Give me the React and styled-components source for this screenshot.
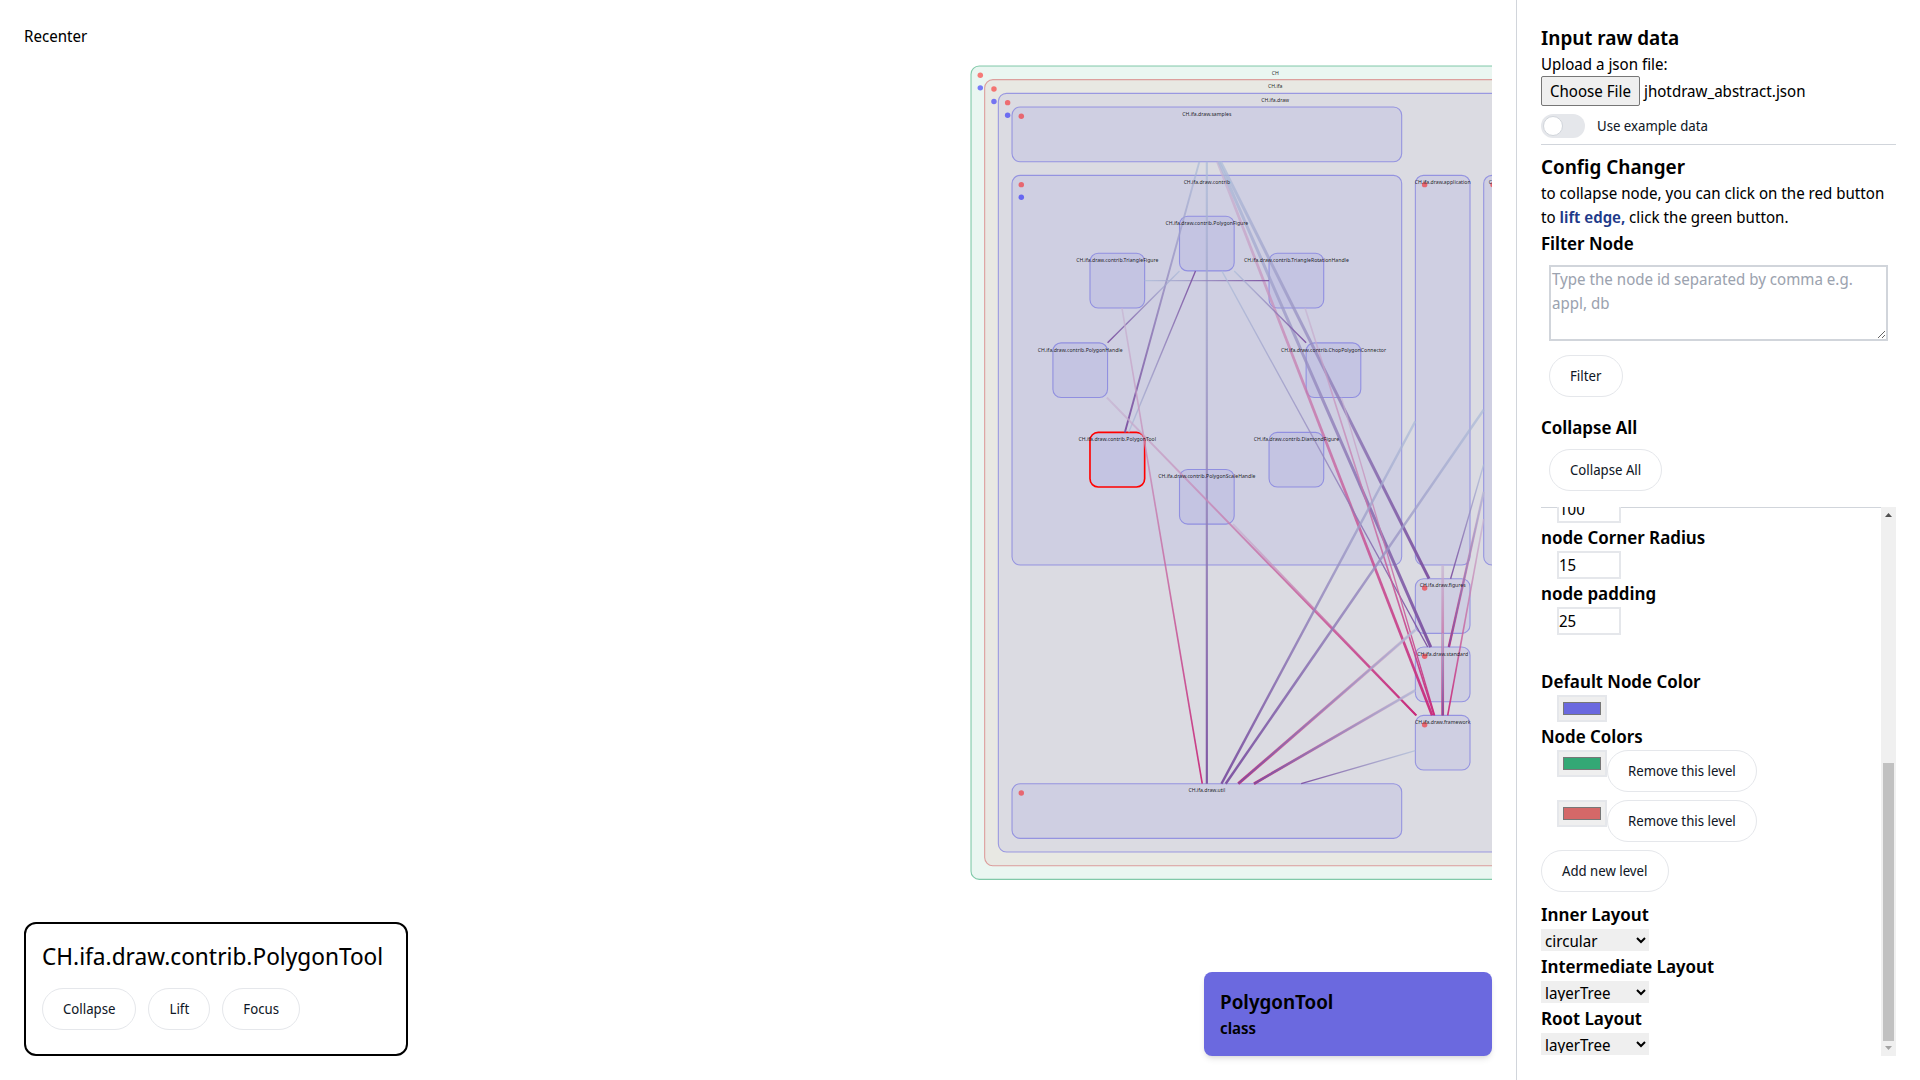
import React, { useEffect, useRef } from "react";
import styled, { createGlobalStyle } from "styled-components";

const Global = createGlobalStyle`
  *, *::before, *::after { box-sizing: border-box; }
  body {
    margin: 0;
    background: #fff;
    color: #000;
    font-family: "Noto Sans Display", "Noto Sans", sans-serif;
    font-size: 16px;
    line-height: 24px;
  }
  h1, h2, h3, p { margin: 0; }
  button, input, select, textarea { font: inherit; color: inherit; margin: 0; }
`;

const Page = styled.div`
  display: flex;
  height: 100vh;
  overflow: hidden;
`;

const Main = styled.main`
  position: relative;
  flex: 1;
  min-width: 0;
  padding: 24px;
`;

const Canvas = styled.svg`
  display: block;
  width: 100%;
  height: 100%;
`;

const Recenter = styled.button`
  position: absolute;
  top: 24px;
  left: 24px;
  padding: 0;
  border: 0;
  background: none;
`;

const Pill = styled.button`
  padding: 10px 20px;
  border: 1px solid #e5e7eb;
  border-radius: 999px;
  background: #fff;
  color: #111827;
  font-size: 14px;
  line-height: 20px;
  white-space: nowrap;
`;

const NodePanel = styled.section`
  position: absolute;
  left: 24px;
  bottom: 24px;
  min-width: 384px;
  padding: 16px 16px 24px;
  border: 2px solid #000;
  border-radius: 12px;
  background: #fff;
`;

const NodeName = styled.h1`
  font-size: 24px;
  font-weight: 400;
  line-height: 32px;
`;

const Actions = styled.div`
  display: flex;
  gap: 12px;
  margin-top: 16px;
`;

const Legend = styled.section`
  position: absolute;
  right: 24px;
  bottom: 24px;
  width: 288px;
  padding: 16px;
  border-radius: 8px;
  background: #6b69df;
  box-shadow: 0 4px 6px -1px rgba(0, 0, 0, 0.1), 0 2px 4px -2px rgba(0, 0, 0, 0.1);
`;

const Title = styled.h2`
  font-size: 20px;
  font-weight: 600;
  line-height: 28px;
`;

const Kind = styled.p`
  font-weight: 600;
`;

const Sidebar = styled.aside`
  display: flex;
  flex-direction: column;
  width: 404px;
  padding: 24px;
  border-left: 1px solid #d1d5db;
`;

const Heading = styled.h3`
  font-size: 18px;
  font-weight: 600;
  line-height: 28px;
`;

const FileRow = styled.div`
  display: flex;
  align-items: center;
  gap: 4px;
`;

const FileLabel = styled.label`
  display: block;
`;

const FileButton = styled.button`
  height: 30px;
  padding: 0 8px;
  border: 1px solid #767676;
  border-radius: 2px;
  background: #efefef;
`;

const Toggle = styled.label`
  display: flex;
  align-items: center;
  gap: 12px;
  height: 24px;
  margin-top: 8px;
  color: #111827;
  font-size: 14px;
  line-height: 20px;
`;

const Switch = styled.input`
  appearance: none;
  display: flex;
  align-items: center;
  width: 44px;
  height: 24px;
  padding: 2px;
  border-radius: 12px;
  background: #e5e7eb;
  &::before {
    content: "";
    width: 20px;
    height: 20px;
    border: 1px solid #d1d5db;
    border-radius: 50%;
    background: #fff;
  }
  &:checked { background: #2563eb; justify-content: flex-end; }
`;

const Rule = styled.hr`
  flex: none;
  width: 100%;
  height: 1px;
  margin: ${(p) => p.$space};
  border: 0;
  background: #d1d5db;
`;

const Lift = styled.strong`
  color: #1e3a8a;
  font-weight: 600;
`;

const FilterBox = styled.textarea`
  display: block;
  width: calc(100% - 16px);
  height: 76px;
  margin: 8px 8px 14px;
  padding: 0 1px;
  border: 2px solid #d1d5db;
  border-radius: 0;
  resize: both;
  outline: none;
  &::placeholder { color: #9ca3af; }
`;

const Indent = styled.div`
  padding: ${(p) => p.$pad};
`;

const ScrollArea = styled.div`
  display: flex;
  flex: 1;
  min-height: 0;
  margin-top: -1px;
`;

const Scroller = styled.div`
  flex: 1;
  min-width: 0;
  overflow-y: scroll;
  scrollbar-width: none;
`;

const ScrollTrack = styled.div`
  display: flex;
  flex-direction: column;
  width: 15px;
  background: #f0f0f0;
`;

const ScrollStep = styled.svg`
  flex: none;
  width: 15px;
  height: 15px;
  fill: ${(p) => (p.$active ? "#505050" : "#a3a3a3")};
`;

const ScrollGap = styled.div`
  flex: 241;
`;

const ScrollThumb = styled.div`
  flex: 278;
  margin: 0 2px;
  background: #c1c1c1;
`;

const Settings = styled.div`
  padding-top: 464px;
`;

const NumberInput = styled.input`
  display: block;
  width: 64px;
  height: 28px;
  margin-left: 16px;
  padding: 0;
  border: 2px solid #e5e7eb;
  background: #fff;
  appearance: textfield;
`;

const ColorInput = styled.input`
  display: block;
  flex: none;
  width: 50px;
  height: 27px;
  margin-left: 16px;
  padding: 1px 2px;
  border: 2px solid #e5e7eb;
  background: #efefef;
`;

const ColorGroup = styled.div`
  margin-top: 32px;
`;

const LevelRow = styled.div`
  display: flex;
  align-items: flex-start;
  margin-bottom: 8px;
`;

const LayoutGroup = styled.div`
  margin-top: 8px;
`;

const SelectRow = styled.div`
  display: flex;
  align-items: center;
  height: 24px;
`;

const Select = styled.select`
  width: 108px;
  height: 22px;
  padding: 0 0 2px;
  border: 0;
  border-radius: 0;
  background: #efefef;
  line-height: 20px;
`;

const Label = styled.text`
  font-size: 10px;
  text-anchor: middle;
  fill: #000;
  fill-opacity: 0.85;
`;

/* Level colours: root, second level, and the default for everything deeper. */
const GREEN = "#33a875";
const RED = "#d46868";
const VIOLET = "#6b69df";

const LEAF = 100;
const INNER = 712.8;
const CX = 431.4;
const CY = 556.4;
const R = 231.6;
const ring = (step) => {
  const a = (step * Math.PI) / 4;
  return { x: CX + R * Math.sin(a) - 50, y: CY - R * Math.cos(a) - 50, w: LEAF, h: LEAF };
};

const nodes = {
  CH: { x: 0, y: 0, w: 1112.8, h: 1487.8, color: GREEN, dots: 2 },
  "CH.ifa": { x: 25, y: 25, w: 1062.8, h: 1437.8, color: RED, dots: 2 },
  "CH.ifa.draw": { x: 50, y: 50, w: 1012.8, h: 1387.8, dots: 2 },
  "CH.ifa.draw.samples": { x: 75, y: 75, w: INNER, h: LEAF, dots: 1 },
  "CH.ifa.draw.contrib": { x: 75, y: 200, w: INNER, h: INNER, dots: 2 },
  "CH.ifa.draw.application": { x: 812.8, y: 200, w: LEAF, h: INNER, dots: 1 },
  "CH.ifa.draw.applet": { x: 937.8, y: 200, w: LEAF, h: INNER, dots: 1 },
  "CH.ifa.draw.figures": { x: 812.8, y: 937.8, w: LEAF, h: LEAF, dots: 1 },
  "CH.ifa.draw.standard": { x: 812.8, y: 1062.8, w: LEAF, h: LEAF, dots: 1 },
  "CH.ifa.draw.framework": { x: 812.8, y: 1187.8, w: LEAF, h: LEAF, dots: 1 },
  "CH.ifa.draw.util": { x: 75, y: 1312.8, w: INNER, h: LEAF, dots: 1 },
  "CH.ifa.draw.contrib.PolygonFigure": ring(0),
  "CH.ifa.draw.contrib.TriangleRotationHandle": ring(1),
  "CH.ifa.draw.contrib.ChopPolygonConnector": ring(2),
  "CH.ifa.draw.contrib.DiamondFigure": ring(3),
  "CH.ifa.draw.contrib.PolygonScaleHandle": ring(4),
  "CH.ifa.draw.contrib.PolygonTool": { ...ring(5), selected: true },
  "CH.ifa.draw.contrib.PolygonHandle": ring(6),
  "CH.ifa.draw.contrib.TriangleFigure": ring(7),
};

/* source, target, kind, width */
const edges = [
  ["samples", "framework", "pink", 5],
  ["samples", "standard", "purple", 5.5],
  ["samples", "figures", "purple", 5.5],
  ["samples", "util", "purple", 4],
  ["samples", "contrib.PolygonTool", "purple", 3.5],
  ["contrib.TriangleFigure", "contrib.TriangleRotationHandle", "purple", 2.5],
  ["contrib.PolygonFigure", "contrib.PolygonHandle", "purple", 2.5],
  ["contrib.PolygonTool", "contrib.PolygonFigure", "purple", 2.5],
  ["contrib.PolygonFigure", "contrib.ChopPolygonConnector", "purple", 2.5],
  ["contrib.PolygonFigure", "standard", "purple", 2.5],
  ["contrib.TriangleFigure", "util", "pink", 3],
  ["contrib.TriangleRotationHandle", "framework", "pink", 3],
  ["contrib.PolygonHandle", "framework", "pink", 3.5],
  ["contrib.PolygonScaleHandle", "framework", "pink", 3],
  ["contrib.ChopPolygonConnector", "framework", "pink", 2.5],
  ["application", "util", "purple", 4.5],
  ["applet", "util", "purple", 4.5],
  ["figures", "util", "pink", 5.5],
  ["figures", "util", "purple", 3],
  ["standard", "util", "pink", 5],
  ["standard", "util", "purple", 3.5],
  ["framework", "util", "purple", 2.5],
  ["application", "framework", "pink", 5],
  ["figures", "framework", "purple", 3],
  ["applet", "figures", "purple", 2.5],
  ["applet", "standard", "pink", 4.5],
  ["applet", "standard", "purple", 2.5],
  ["applet", "framework", "pink", 3],
];

const edgeColors = {
  purple: ["#abbbd8", "#7b4fa0"],
  pink: ["#c6b4d2", "#c8287a"],
};

/* Point where the ray from the centre of a towards the centre of b leaves a. */
function border(a, b) {
  const ax = a.x + a.w / 2;
  const ay = a.y + a.h / 2;
  const dx = b.x + b.w / 2 - ax;
  const dy = b.y + b.h / 2 - ay;
  const t = Math.min(
    dx ? a.w / 2 / Math.abs(dx) : Infinity,
    dy ? a.h / 2 / Math.abs(dy) : Infinity
  );
  return [ax + dx * t, ay + dy * t];
}

function GraphEdge({ id, edge }) {
  const [from, to, kind, width] = edge;
  const a = nodes["CH.ifa.draw." + from];
  const b = nodes["CH.ifa.draw." + to];
  const [x1, y1] = border(a, b);
  const [x2, y2] = border(b, a);
  const [start, end] = edgeColors[kind];
  return (
    <g>
      <linearGradient id={id} gradientUnits="userSpaceOnUse" x1={x1} y1={y1} x2={x2} y2={y2}>
        <stop offset="0" stopColor={start} stopOpacity="0.7" />
        <stop offset="1" stopColor={end} stopOpacity="0.95" />
      </linearGradient>
      <line x1={x1} y1={y1} x2={x2} y2={y2} stroke={`url(#${id})`} strokeWidth={width} />
    </g>
  );
}

function GraphNode({ node }) {
  const color = node.color || VIOLET;
  return (
    <rect
      x={node.x}
      y={node.y}
      width={node.w}
      height={node.h}
      rx="15"
      fill={color}
      fillOpacity="0.1"
      stroke={node.selected ? "#f00" : color}
      strokeOpacity={node.selected ? 1 : 0.6}
      strokeWidth={node.selected ? 3 : 2}
    />
  );
}

function Graph() {
  return (
    <Canvas role="img" aria-label="Dependency graph">
      <g transform="translate(947 42) scale(0.5467)">
        {Object.entries(nodes).map(([id, n]) => (
          <GraphNode key={id} node={n} />
        ))}
        {edges.map((e, i) => (
          <GraphEdge key={i} id={`edge-${i}`} edge={e} />
        ))}
        {Object.entries(nodes).map(([id, n]) => (
          <g key={id}>
            {n.dots > 0 && <circle cx={n.x + 17} cy={n.y + 17} r="5" fill="#f00" fillOpacity="0.5" />}
            {n.dots > 1 && <circle cx={n.x + 17} cy={n.y + 40} r="5" fill="#00f" fillOpacity="0.5" />}
            <Label x={n.x + n.w / 2} y={n.y + 16}>{id}</Label>
          </g>
        ))}
      </g>
    </Canvas>
  );
}

function LayoutField({ id, label, value }) {
  return (
    <>
      <Heading><label htmlFor={id}>{label}</label></Heading>
      <SelectRow>
        <Select id={id} defaultValue={value}>
          <option>circular</option>
          <option>layerTree</option>
        </Select>
      </SelectRow>
    </>
  );
}

export default function App() {
  const scroller = useRef(null);
  const picker = useRef(null);
  useEffect(() => {
    scroller.current.scrollTop = scroller.current.scrollHeight;
  }, []);

  return (
    <Page>
      <Global />
      <Main>
        <Graph />
        <Recenter>Recenter</Recenter>
        <NodePanel>
          <NodeName>CH.ifa.draw.contrib.PolygonTool</NodeName>
          <Actions>
            <Pill>Collapse</Pill>
            <Pill>Lift</Pill>
            <Pill>Focus</Pill>
          </Actions>
        </NodePanel>
        <Legend>
          <Title>PolygonTool</Title>
          <Kind>class</Kind>
        </Legend>
      </Main>
      <Sidebar>
        <Title>Input raw data</Title>
        <FileLabel htmlFor="file">Upload a json file:</FileLabel>
        <FileRow>
          <input id="file" ref={picker} type="file" accept=".json" hidden />
          <FileButton onClick={() => picker.current.click()}>Choose File</FileButton>
          <span>jhotdraw_abstract.json</span>
        </FileRow>
        <Toggle>
          <Switch type="checkbox" />
          Use example data
        </Toggle>
        <Rule $space="6px 0 8px" />
        <Title>Config Changer</Title>
        <p>
          to collapse node, you can click on the red button to <Lift>lift edge,</Lift> click the
          green button.
        </p>
        <Heading><label htmlFor="filter">Filter Node</label></Heading>
        <FilterBox id="filter" placeholder="Type the node id separated by comma e.g. appl, db" />
        <Indent $pad="0 8px 16px">
          <Pill>Filter</Pill>
        </Indent>
        <Heading>Collapse All</Heading>
        <Indent $pad="8px 8px 16px">
          <Pill>Collapse All</Pill>
        </Indent>
        <Rule $space="0" />
        <ScrollArea>
          <Scroller ref={scroller}>
            <Settings>
              <NumberInput type="number" aria-label="node size" defaultValue="100" />
              <Heading><label htmlFor="radius">node Corner Radius</label></Heading>
              <NumberInput id="radius" type="number" defaultValue="15" />
              <Heading><label htmlFor="padding">node padding</label></Heading>
              <NumberInput id="padding" type="number" defaultValue="25" />
              <ColorGroup>
                <Heading><label htmlFor="default-color">Default Node Color</label></Heading>
                <ColorInput id="default-color" type="color" defaultValue={VIOLET} />
                <Heading>Node Colors</Heading>
                <LevelRow>
                  <ColorInput type="color" aria-label="Level 1" defaultValue={GREEN} />
                  <Pill>Remove this level</Pill>
                </LevelRow>
                <LevelRow>
                  <ColorInput type="color" aria-label="Level 2" defaultValue={RED} />
                  <Pill>Remove this level</Pill>
                </LevelRow>
                <Pill>Add new level</Pill>
              </ColorGroup>
              <LayoutGroup>
                <LayoutField id="inner" label="Inner Layout" value="circular" />
                <LayoutField id="intermediate" label="Intermediate Layout" value="layerTree" />
                <LayoutField id="root-layout" label="Root Layout" value="layerTree" />
              </LayoutGroup>
            </Settings>
          </Scroller>
          <ScrollTrack aria-hidden="true">
            <ScrollStep $active viewBox="0 0 15 15"><path d="M4 10 7.5 6 11 10z" /></ScrollStep>
            <ScrollGap />
            <ScrollThumb />
            <ScrollStep viewBox="0 0 15 15"><path d="M4 5 7.5 9 11 5z" /></ScrollStep>
          </ScrollTrack>
        </ScrollArea>
      </Sidebar>
    </Page>
  );
}
